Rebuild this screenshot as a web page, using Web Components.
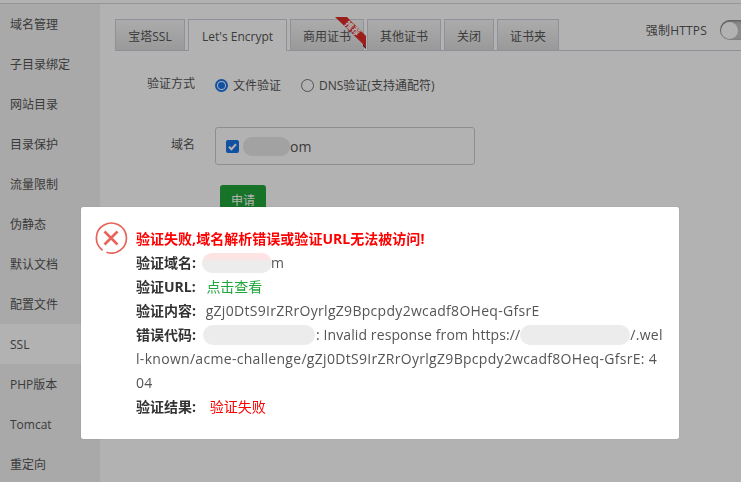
<!DOCTYPE html>
<html lang="zh">
<head>
<meta charset="utf-8">
<title>SSL</title>
<style>
  html, body { margin: 0; height: 100%; overflow: hidden; background: #fff; }
  body { font-family: "Open Sans", "Noto Sans CJK SC", sans-serif; font-size: 12px; color: #555; }
</style>
</head>
<body>
<site-panel></site-panel>
<verify-dialog></verify-dialog>

<script>
class SitePanel extends HTMLElement {
  connectedCallback() {
    const items = ['域名管理','子目录绑定','网站目录','目录保护','流量限制','伪静态','默认文档','配置文件','SSL','PHP版本','Tomcat','重定向'];
    this.attachShadow({ mode: 'open' });
    this.shadowRoot.innerHTML = `
      <style>
        :host { display: flex; height: 482px; border-top: 1px solid #d6d6d6; margin-top: 3px; box-sizing: border-box; }
        nav { width: 100px; flex: none; background: #f2f2f2; }
        nav div { height: 40px; line-height: 42px; padding-left: 10px; color: #555; }
        nav div.on { background: #fff; }
        main { flex: 1; min-width: 0; padding: 15px 0 0 15px; }
      </style>
      <nav>${items.map(i => `<div class="${i === 'SSL' ? 'on' : ''}">${i}</div>`).join('')}</nav>
      <main>
        <ssl-tabs></ssl-tabs>
        <ssl-form></ssl-form>
      </main>
    `;
  }
}

class SslTabs extends HTMLElement {
  connectedCallback() {
    this.attachShadow({ mode: 'open' });
    this.shadowRoot.innerHTML = `
      <style>
        :host { display: flex; align-items: flex-start; gap: 3px; height: 32px; box-sizing: border-box; border-bottom: 1px solid #cfd0da; }
        .tab {
          position: relative; height: 31px; line-height: 34px; box-sizing: border-box; text-align: center;
          border: 1px solid #cfd0da; border-bottom: 0; color: #555;
          background: linear-gradient(#f6f6f6, #dcdcdc);
        }
        .on { background: #fff; height: 32px; color: #555; }
        .ribbon { position: absolute; left: 44px; top: -3px; display: block; }
        .https { margin-left: auto; margin-right: -19px; display: flex; align-items: center; gap: 13px; height: 20px; margin-top: 1px; flex: none; }
        .https span:first-child { letter-spacing: .2px; }
        .toggle { width: 40px; height: 20px; border-radius: 10px; background: #c4c4c4; box-shadow: inset 1px 1px 3px rgba(0,0,0,.4); position: relative; }
        .toggle i { position: absolute; left: 1px; top: 2px; width: 17px; height: 17px; border-radius: 50%; background: #fff; }
        svg text { font-family: "Noto Sans CJK SC", sans-serif; font-size: 8.5px; font-weight: 700; fill: #fff; text-anchor: middle; }
      </style>
      <div class="tab" style="width:70px">宝塔SSL</div>
      <div class="tab on" style="width:99px">Let's Encrypt</div>
      <div class="tab" style="width:74px">商用证书
        <svg class="ribbon" width="32" height="34" viewBox="0 0 32 34">
          <polygon points="0,0 12,0 31,19 31,30" fill="#e02c26"/>
          <polygon points="28,27 31,30 31,32 28,29" fill="#7a1a14"/>
          <text transform="translate(17.5,11.5) rotate(45)" x="0" y="3">推荐</text>
        </svg>
      </div>
      <div class="tab" style="width:74px">其他证书</div>
      <div class="tab" style="width:50px">关闭</div>
      <div class="tab" style="width:62px">证书夹</div>
      <div class="https"><span>强制HTTPS</span><span class="toggle"><i></i></span></div>
    `;
  }
}

class SslForm extends HTMLElement {
  connectedCallback() {
    this.attachShadow({ mode: 'open' });
    this.shadowRoot.innerHTML = `
      <style>
        :host { display: block; padding-top: 22px; }
        .row { display: flex; align-items: center; gap: 20px; }
        .label { width: 80px; text-align: right; flex: none; position: relative; top: -2px; }
        .radios { display: flex; align-items: center; height: 24px; gap: 20px; }
        .radios span { display: flex; align-items: center; gap: 5px; }
        .radio { width: 13px; height: 13px; border-radius: 50%; border: 1px solid #767676; box-sizing: border-box; }
        .radio.on { border: 2px solid #1a73e8; position: relative; }
        .radio.on::after { content: ""; position: absolute; inset: 1px; border-radius: 50%; background: #1a73e8; }
        .domains { width: 260px; height: 38px; box-sizing: border-box; border: 1px solid #ccc; border-radius: 3px; display: flex; align-items: center; padding-left: 10px; color: #555; font-size: 14px; }
        .check { width: 13px; height: 13px; background: #1a73e8; border-radius: 2px; display: flex; margin-right: 4px; }
        .blur { width: 47px; height: 19px; border-radius: 9px; background: #e8e8e8; }
        button { display: block; margin: 20px 0 0 105px; width: 46px; height: 34px; border: 0; border-radius: 3px; background: #20a53a; color: #fff; font: inherit; padding: 0 0 4px; }
      </style>
      <div class="row">
        <div class="label">验证方式</div>
        <div class="radios">
          <span><i class="radio on"></i>文件验证</span>
          <span><i class="radio"></i>DNS验证(支持通配符)</span>
        </div>
      </div>
      <div class="row" style="margin-top:30px">
        <div class="label">域名</div>
        <div class="domains">
          <i class="check"><svg width="13" height="13" viewBox="0 0 13 13"><path d="M3 6.8l2.4 2.4L10 4.2" fill="none" stroke="#fff" stroke-width="2"/></svg></i>
          <i class="blur"></i>om
        </div>
      </div>
      <button>申请</button>
    `;
  }
}

class VerifyDialog extends HTMLElement {
  connectedCallback() {
    this.attachShadow({ mode: 'open' });
    this.shadowRoot.innerHTML = `
      <style>
        :host { position: fixed; inset: 0; background: rgba(0,0,0,.3); display: block; }
        .box {
          position: absolute; left: 81px; top: 207px; width: 598px; height: 232px; box-sizing: border-box;
          background: #fff; border-radius: 2px; box-shadow: 0 0 1px rgba(0,0,0,.3);
          padding: 20px 10px 0 55px; font-size: 14px; line-height: 24px; color: #555;
        }
        svg { position: absolute; left: 13px; top: 14px; }
        h3 { margin: 0; font-size: 14px; font-weight: 700; color: #f00; line-height: 24px; letter-spacing: .03px; }
        b { font-weight: 700; color: #333; }
        .row { white-space: nowrap; }
        .val { letter-spacing: .3px; }
        .blob { display: inline-block; vertical-align: top; height: 20px; border-radius: 10px; }
        .ok { color: #20a53a; }
        .bad { color: #f00; }
      </style>
      <div class="box">
        <svg width="34" height="34" viewBox="0 0 34 34" fill="none" stroke="#e8635a">
          <path d="M8.5 29.2A15 15 0 1 1 12.5 31.3" stroke-width="1.7"/>
          <path d="M10.5 10.5l13 13M23.5 10.5l-13 13" stroke-width="2.6"/>
        </svg>
        <h3>验证失败,域名解析错误或验证URL无法被访问!</h3>
        <div class="row"><b>验证域名:</b><span class="blob" style="width:70px;margin:2px -1px 0 6px;background:linear-gradient(#fde3e3 25%,#ececec 45%)"></span>m</div>
        <div class="row"><b>验证URL:</b> <span class="ok" style="margin-left:7px">点击查看</span></div>
        <div class="row"><b>验证内容:</b> <span class="val" style="margin-left:6px">gZj0DtS9IrZRrOyrlgZ9Bpcpdy2wcadf8OHeq-GfsrE</span></div>
        <div class="row"><b>错误代码:</b><span class="blob" style="width:112px;margin:2px 1px 0 7px;background:#ececec"></span><span style="letter-spacing:.1px">: Invalid response from https://</span><span class="blob" style="width:110px;margin-top:2px;background:#ececec"></span><span class="val">/.wel</span></div>
        <div class="row val">l-known/acme-challenge/gZj0DtS9IrZRrOyrlgZ9Bpcpdy2wcadf8OHeq-GfsrE: 4</div>
        <div class="row val">04</div>
        <div class="row"><b>验证结果:</b> <span class="bad" style="margin-left:10px">验证失败</span></div>
      </div>
    `;
  }
}

customElements.define('site-panel', SitePanel);
customElements.define('ssl-tabs', SslTabs);
customElements.define('ssl-form', SslForm);
customElements.define('verify-dialog', VerifyDialog);
</script>
</body>
</html>
